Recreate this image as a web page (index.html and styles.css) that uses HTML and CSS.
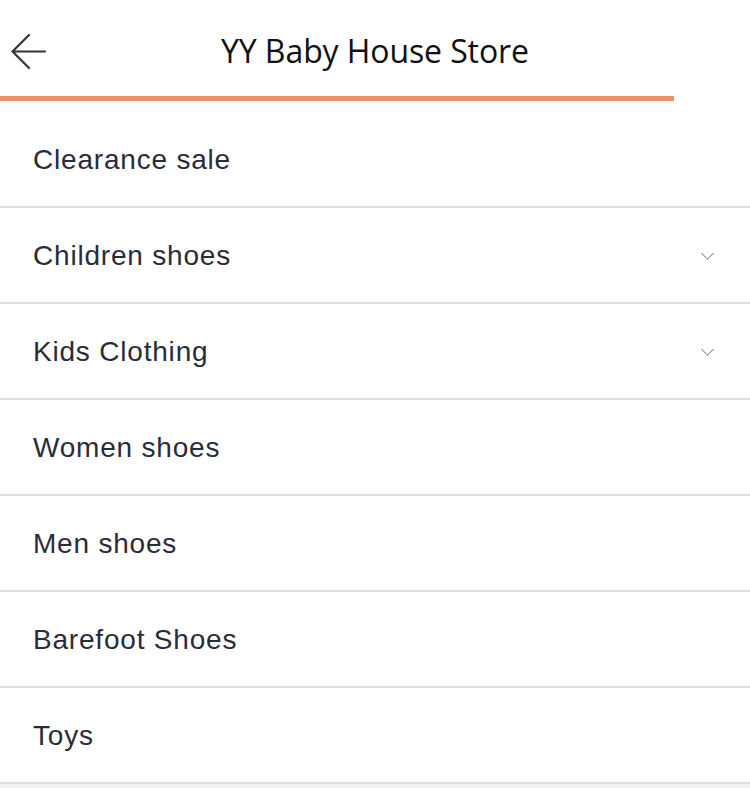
FILE: index.html
```html
<!DOCTYPE html>
<html lang="en">
<head>
    <meta charset="UTF-8" />
    <meta name="viewport" content="width=device-width, initial-scale=1.0" />
    <title>YY Baby House Store</title>
    <link rel="stylesheet" href="styles.css">
</head>
<body>
    <!-- Header -->
    <header class="top-bar">
        <div class="title-row">
            <a class="back-btn" href="#">
                <svg width="36" height="40" viewBox="0 0 36 40">
                    <path d="M18 2 L1.5 18.5 L18 35 M1.5 18.5 L34 18.5" fill="none" stroke="#333" stroke-width="2.2" stroke-linecap="round" stroke-linejoin="miter"/>
                </svg>
            </a>
            <h1>YY Baby House Store</h1>
        </div>
        <div class="progress"></div>
    </header>

    <!-- Category list -->
    <ul class="category-list">
        <li>Clearance sale</li>
        <li class="has-sub">Children shoes <span class="chevron"></span></li>
        <li class="has-sub">Kids Clothing <span class="chevron"></span></li>
        <li>Women shoes</li>
        <li>Men shoes</li>
        <li>Barefoot Shoes</li>
        <li>Toys</li>
    </ul>
</body>
</html>
```

FILE: styles.css
```css
/* base */
html, body {
    margin: 0;
    padding: 0;
    background: #f1f1f1;
    font-family: "Liberation Sans", Arial, sans-serif;
}

/* header */
.top-bar {
    background: #fff;
    height: 112px;
}
.title-row {
    position: relative;
    height: 96px;
    display: flex;
    align-items: center;
    justify-content: center;
}
.back-btn {
    position: absolute;
    left: 11px;
    top: 33px;
    display: block;
    line-height: 0;
}
.title-row h1 {
    margin: 5px 0 0 0;
    font-family: "Open Sans", sans-serif;
    font-weight: 400;
    font-size: 32px;
    color: #111;
    letter-spacing: -0.1px;
}
.progress {
    width: 674px;
    height: 5px;
    background: #ec8f6a;
}

/* list */
.category-list {
    list-style: none;
    margin: 0;
    padding: 0;
    background: #fff;
}
.category-list li {
    height: 94px;
    box-sizing: content-box;
    border-bottom: 2px solid #dedede;
    display: flex;
    align-items: center;
    justify-content: space-between;
    padding: 0 38px 0 33px;
    font-size: 28px;
    line-height: 1;
    letter-spacing: 0.8px;
    color: #2a2c37;
}
.category-list li::before { content: none; }
.category-list li { padding-top: 2px; height: 92px; }
.chevron {
    width: 8px;
    height: 8px;
    border-right: 1.5px solid #8a8a8a;
    border-bottom: 1.5px solid #8a8a8a;
    transform: rotate(45deg);
    margin-top: -6px;
}
```
